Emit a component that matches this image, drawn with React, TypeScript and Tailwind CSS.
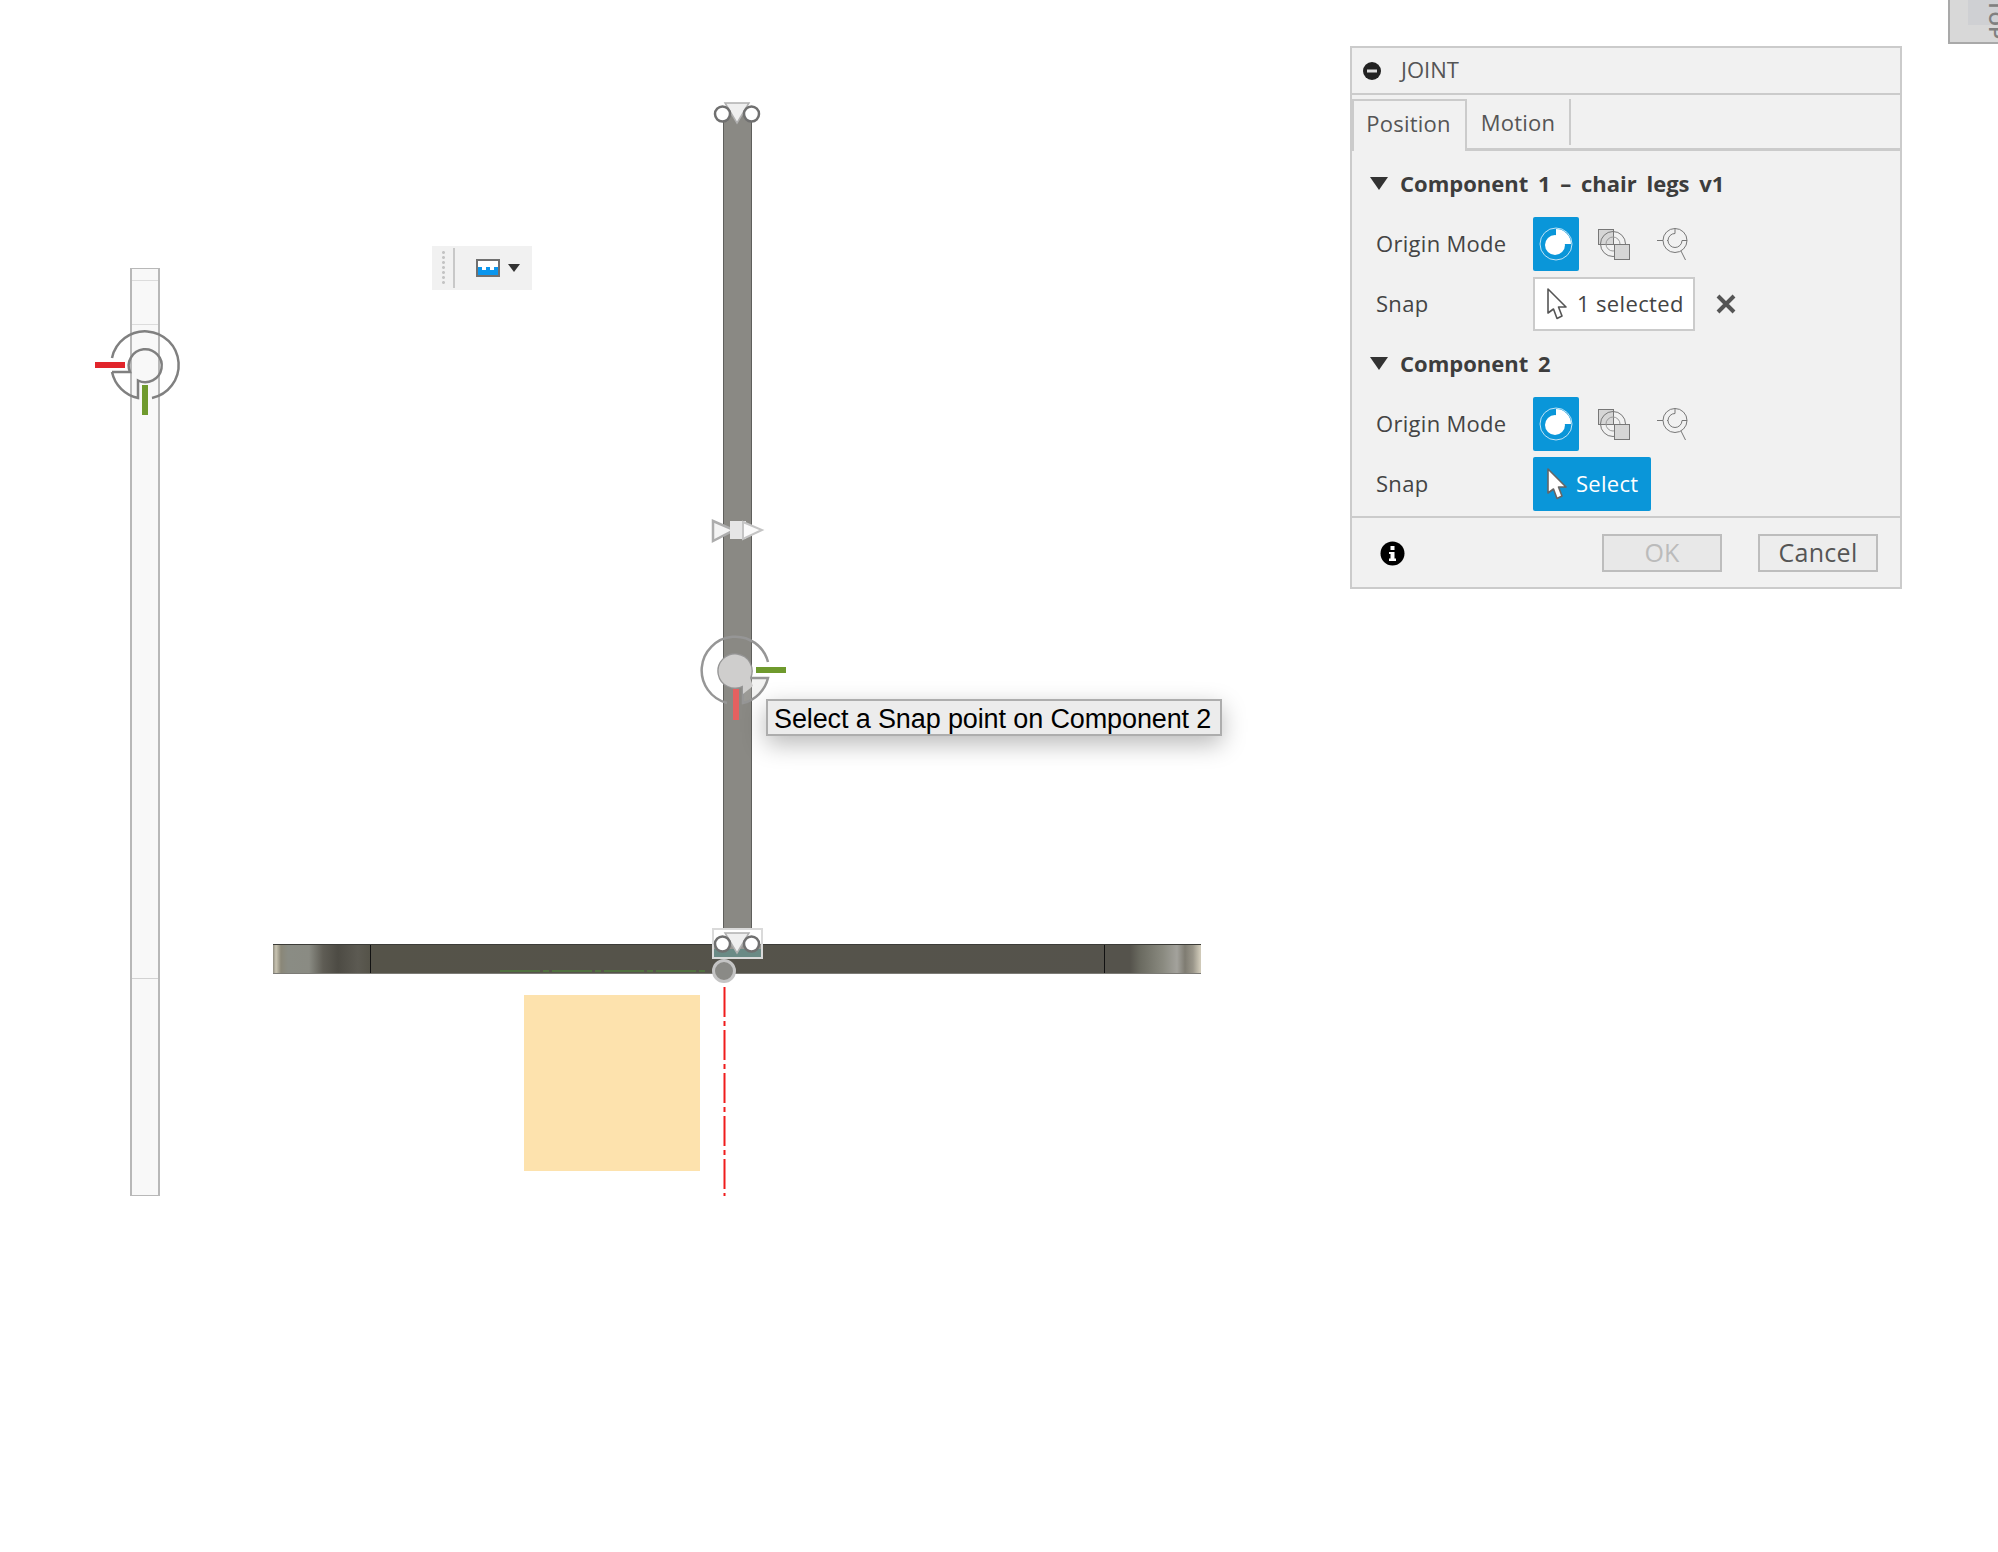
const uiFont = "font-['Open_Sans',sans-serif]";

const OriginIcon = () => (
  <svg width="46" height="54" viewBox="0 0 46 54">
    <circle cx="23" cy="27" r="16" fill="none" stroke="#bfe3f6" strokeWidth="1" />
    <path d="M23 12 A15 15 0 0 1 38 27 L23 27 Z" fill="#fff" />
    <circle cx="22" cy="28" r="10" fill="#fff" />
  </svg>
);

const MultiIcon = () => (
  <svg width="46" height="54" viewBox="0 0 46 54">
    <rect x="7.5" y="12.5" width="15" height="15" fill="#d6d6d6" stroke="#777" />
    <circle cx="22" cy="27" r="12.5" fill="none" stroke="#777" />
    <circle cx="22" cy="27" r="7" fill="none" stroke="#999" />
    <rect x="23.5" y="27.5" width="15" height="15" fill="#d6d6d6" stroke="#777" />
  </svg>
);

const FindIcon = () => (
  <svg width="46" height="54" viewBox="0 0 46 54">
    <circle cx="23" cy="23.5" r="12" fill="none" stroke="#777" />
    <path d="M5 23.5 H11 M15 23.5 H16 M23 16.5 A7 7 0 1 0 30 23.5 H35 M23 11.5 V16.5" fill="none" stroke="#777" />
    <path d="M29 34 L33.5 43" fill="none" stroke="#777" />
  </svg>
);

const Cursor = ({ fill, stroke }: { fill: string; stroke: string }) => (
  <svg width="22" height="34" viewBox="0 0 22 34">
    <path d="M2 2 L20 20 L12.5 20 L16 29 L11 31.5 L7.5 22 L2 26 Z" fill={fill} stroke={stroke} strokeWidth="1.6" strokeLinejoin="round" />
  </svg>
);

const Triangle = () => (
  <svg width="18" height="14" viewBox="0 0 18 14" className="shrink-0">
    <path d="M0 0 H18 L9 13 Z" fill="#333" />
  </svg>
);

const Section = ({ title, snap }: { title: string; snap: React.ReactNode }) => (
  <div className="flex flex-col">
    <div className="flex h-[34px] items-center gap-[12px] pl-[18px]">
      <Triangle />
      <span className="pb-[2px] text-[22px] font-bold [word-spacing:4px] text-[#3d3d3d]">{title}</span>
    </div>
    <div className="mt-[16px] flex h-[54px] items-center pl-[24px]">
      <span className="w-[157px] pb-[2px] text-[22px] tracking-[0.3px] text-[#444]">Origin Mode</span>
      <div className="flex h-[54px] w-[46px] items-center justify-center rounded-[2px] bg-[#0a96d9]">
        <OriginIcon />
      </div>
      <div className="ml-[12px]"><MultiIcon /></div>
      <div className="ml-[15px]"><FindIcon /></div>
    </div>
    <div className="mt-[6px] flex h-[54px] items-center pl-[24px]">
      <span className="w-[157px] pb-[2px] text-[22px] tracking-[0.3px] text-[#444]">Snap</span>
      {snap}
    </div>
  </div>
);

const JointPanel = () => (
  <div className={`absolute left-[1350px] top-[46px] flex h-[543px] w-[552px] flex-col border-2 border-[#cbcbcb] bg-[#f1f1f1] ${uiFont}`}>
    <div className="flex h-[47px] shrink-0 items-center gap-[19px] border-b-2 border-[#cbcbcb] pl-[10px]">
      <svg width="20" height="20" viewBox="0 0 20 20">
        <circle cx="10" cy="10" r="9" fill="#222" />
        <rect x="5" y="8.5" width="10" height="3" fill="#ddd" />
      </svg>
      <span className="pb-[2px] text-[22px] text-[#555]">JOINT</span>
    </div>
    <div className="flex h-[56px] shrink-0 items-stretch pt-[4px]">
      <div className="flex w-[115px] items-center justify-center border-x-2 border-t-2 border-[#cbcbcb] pb-[5px] pr-[2px] text-[22px] tracking-[0.25px] text-[#555]">
        Position
      </div>
      <div className="flex flex-1 items-stretch border-b-[3px] border-[#cbcbcb]">
        <div className="mb-[3px] flex w-[104px] items-center justify-center border-r-2 border-[#cbcbcb] text-[22px] tracking-[0.2px] text-[#555]">
          Motion
        </div>
      </div>
    </div>
    <div className="flex flex-1 flex-col gap-[16px] pt-[16px]">
      <Section
        title="Component 1 – chair legs v1"
        snap={
          <div className="flex h-[54px] w-[162px] items-center gap-[9px] border-2 border-[#cbcbcb] bg-white pl-[11px]">
            <Cursor fill="#fff" stroke="#555" />
            <span className="whitespace-nowrap pb-[2px] text-[22px] tracking-[0.35px] text-[#444]">1 selected</span>
            <svg width="20" height="20" viewBox="0 0 20 20" className="absolute left-[364px] top-[246px]">
              <path d="M2 2 L18 18 M18 2 L2 18" stroke="#555" strokeWidth="4" />
            </svg>
          </div>
        }
      />
      <Section
        title="Component 2"
        snap={
          <div className="flex h-[54px] w-[118px] items-center gap-[8px] rounded-[2px] bg-[#0a96d9] pl-[13px]">
            <Cursor fill="#fff" stroke="#666" />
            <span className="pb-[2px] text-[22px] tracking-[0.3px] text-white">Select</span>
          </div>
        }
      />
    </div>
    <div className="flex h-[71px] shrink-0 items-start border-t-2 border-[#cbcbcb] pl-[28px] pr-[22px] pt-[16px]">
      <svg width="25" height="25" viewBox="0 0 25 25" className="mt-[7px]">
        <circle cx="12.5" cy="12.5" r="12" fill="#000" />
        <rect x="10.5" y="5" width="4" height="4" fill="#fff" />
        <path d="M9 11 H14.5 V17.5 H16 V20 H9 V17.5 H10.5 V13 H9 Z" fill="#fff" />
      </svg>
      <div className="ml-auto flex h-[38px] w-[120px] items-center justify-center border-2 border-[#bdbdbd] bg-[#e8e8e8] text-[25px] text-[#bbb]">
        OK
      </div>
      <div className="ml-[36px] flex h-[38px] w-[120px] items-center justify-center border-2 border-[#bdbdbd] bg-[#ededed] text-[25px] tracking-[0.3px] text-[#555]">
        Cancel
      </div>
    </div>
  </div>
);

// the origin marker of a joint, gaps in the ring are where the axis bars sit
const GhostRing = () => (
  <svg className="absolute left-[105px] top-[325px] blur-[0.5px]" width="80" height="80" viewBox="-40 -40 80 80">
    <path d="M-33 -7 A33.7 33.7 0 1 1 7 33 M-33 7 H-15 A16.5 16.5 0 1 1 -7 15.5 V33 A33.7 33.7 0 0 1 -33 7" fill="none" stroke="#808080" strokeWidth="2.5" />
  </svg>
);

const SnapRing = () => (
  <svg className="absolute left-[695px] top-[630px] blur-[0.5px]" width="80" height="80" viewBox="-40 -40 80 80">
    <path d="M33 -8 A33.7 33.7 0 1 0 -8 33" fill="none" stroke="#969696" strokeWidth="2.5" />
    <path d="M33 8 H15 A16.5 16.5 0 1 0 8 15.5 V33 A33.7 33.7 0 0 0 33 8 Z" fill="#cfcecd" fillOpacity="0.25" stroke="#969696" strokeWidth="2.5" />
    <path d="M15 8 A16.5 16.5 0 1 0 8 15.5 V24 L18 16 Z" fill="#cfcecd" />
  </svg>
);

const HandlePair = ({ className }: { className: string }) => (
  <svg className={`${className} blur-[0.4px]`} width="52" height="34" viewBox="0 0 52 34">
    <path d="M13 3 H37 L25 23 Z" fill="#efefef" stroke="#b0b0b0" strokeWidth="1.5" />
    <circle cx="10.5" cy="14" r="7.5" fill="#fff" stroke="#707070" strokeWidth="2.5" />
    <circle cx="39.5" cy="14" r="7.5" fill="#fff" stroke="#707070" strokeWidth="2.5" />
  </svg>
);

const Viewport = () => (
  <>
    {/* ghost leg on the left */}
    <div className="absolute left-[130px] top-[268px] h-[928px] w-[30px] border-x-2 border-y border-[#b8b8b8] bg-[#f8f8f8]">
      <div className="mt-[11px] h-[1px] bg-[#dcdcdc]" />
      <div className="mt-[43px] h-[1px] bg-[#dcdcdc]" />
      <div className="mt-[653px] h-[1px] bg-[#d2d2d2]" />
    </div>
    <GhostRing />
    <div className="absolute left-[95px] top-[362px] h-[6px] w-[30px] bg-[#e1252b]" />
    <div className="absolute left-[142px] top-[385px] h-[30px] w-[6px] bg-[#6f9a2d]" />

    {/* floating toolbar */}
    <div className="absolute left-[432px] top-[246px] flex h-[44px] w-[100px] items-center bg-[#f1f1f1]">
      <div className="ml-[8px] h-[36px] w-[7px] bg-[radial-gradient(#c4c4c4_1.5px,transparent_2px)] bg-[length:7px_5px]" />
      <div className="ml-[6px] h-[40px] w-[2px] bg-[#c8c8c8]" />
      <svg className="ml-[21px]" width="24" height="18" viewBox="0 0 24 18">
        <rect x="1" y="1" width="22" height="16" fill="#fff" stroke="#707070" strokeWidth="2" />
        <path d="M2 8 H6 V11 H10 V8 H14 V11 H18 V8 H22 V16 H2 Z" fill="#0a96ee" />
      </svg>
      <svg className="ml-[8px]" width="12" height="8" viewBox="0 0 12 8">
        <path d="M0 0 H12 L6 8 Z" fill="#333" />
      </svg>
    </div>

    {/* leg seen from the front */}
    <div className="absolute left-[723px] top-[114px] h-[816px] w-[29px] border-x border-[#5f5f5c] bg-[#8a8984]" />

    {/* seat */}
    <div className="absolute left-[273px] top-[944px] h-[30px] w-[928px] border-y border-t-[#3c3c38] border-b-[#7c7b76] bg-[linear-gradient(90deg,#8f8c80_0px,#c9c4b2_3px,#8a8778_8px,#8a8c84_15px,#8a8b83_36px,#5f5d55_50px,#4d4b44_65px,#5c5a52_85px,#555349_97px,#55534c_857px,#6a6a60_867px,#8a8a80_890px,#a3a29c_904px,#7f7c72_912px,#9a968a_920px,#cfc9b8_927px)]">
      <div className="absolute left-[97px] top-0 h-full w-[1px] bg-[#111]" />
      <div className="absolute left-[831px] top-0 h-full w-[1px] bg-[#111]" />
    </div>

    {/* handles on the leg */}
    <HandlePair className="absolute left-[712px] top-[100px]" />
    <svg className="absolute left-[710px] top-[518px] blur-[0.4px]" width="56" height="26" viewBox="0 0 56 26">
      <path d="M3 3 L24 12 L3 23 Z" fill="#f4f4f4" stroke="#adadad" strokeWidth="2.5" />
      <rect x="20" y="3" width="16" height="18" fill="#e6e6e6" />
      <path d="M33 4 L52 12 L33 21 Z" fill="#fafafa" stroke="#c4c4c4" strokeWidth="2" />
    </svg>
    <div className="absolute left-[712px] top-[928px] h-[31px] w-[51px] border-2 border-[#dadada] bg-white/40 blur-[0.4px]">
      <div className="absolute bottom-0 left-0 h-[8px] w-full bg-[#6a8a85]" />
    </div>
    <HandlePair className="absolute left-[712px] top-[930px]" />
    <svg className="absolute left-[708px] top-[955px] blur-[0.4px]" width="32" height="32" viewBox="0 0 32 32">
      <circle cx="16" cy="16" r="10.5" fill="#8a8a86" stroke="#c4c4c4" strokeWidth="3" />
    </svg>

    {/* sketch lines and the peach face */}
    <svg className="absolute left-[498px] top-[965px]" width="232" height="235" viewBox="0 0 232 235">
      <path d="M2 6 H210" fill="none" stroke="#4f7d3c" strokeWidth="1.5" strokeDasharray="40 3 6 3" />
      <path d="M226.5 22 V231" fill="none" stroke="#f01c1c" strokeWidth="2" strokeDasharray="30 4 5 4" />
    </svg>
    <div className="absolute left-[524px] top-[995px] h-[176px] w-[176px] bg-[#fde2ad]" />

    <SnapRing />
    <div className="absolute left-[756px] top-[667px] h-[6px] w-[30px] bg-[#6f9a2d]" />
    <div className="absolute left-[733px] top-[689px] h-[31px] w-[6px] bg-[#e56060]" />

    {/* view cube corner, its label runs off the window like in the app */}
    <div className="absolute left-[1948px] top-0 h-[44px] w-[50px] overflow-hidden border-b-2 border-l-2 border-[#a9a9a9] bg-[#d8d8d8]">
      <div className="absolute left-[18px] top-0 h-[25px] w-[32px] bg-[#cfd0d3]" />
      <span className="absolute left-[45px] -top-[12px] origin-left rotate-90 font-['Liberation_Sans',sans-serif] text-[18px] font-bold leading-[24px] tracking-[1px] text-[#808080]">
        TOP
      </span>
    </div>
  </>
);

export default function App() {
  return (
    <div className="relative h-[1552px] w-[1998px] overflow-hidden bg-white">
      <Viewport />
      <JointPanel />
      <div className="absolute left-[766px] top-[699px] flex h-[37px] w-[456px] items-center whitespace-nowrap border-2 border-[#adadad] bg-[#ececec] pl-[6px] pt-[3px] font-['Liberation_Sans',sans-serif] text-[27px] tracking-[-0.12px] text-black shadow-[0_8px_24px_rgba(0,0,0,0.28)]">
        Select a Snap point on Component 2
      </div>
    </div>
  );
}
